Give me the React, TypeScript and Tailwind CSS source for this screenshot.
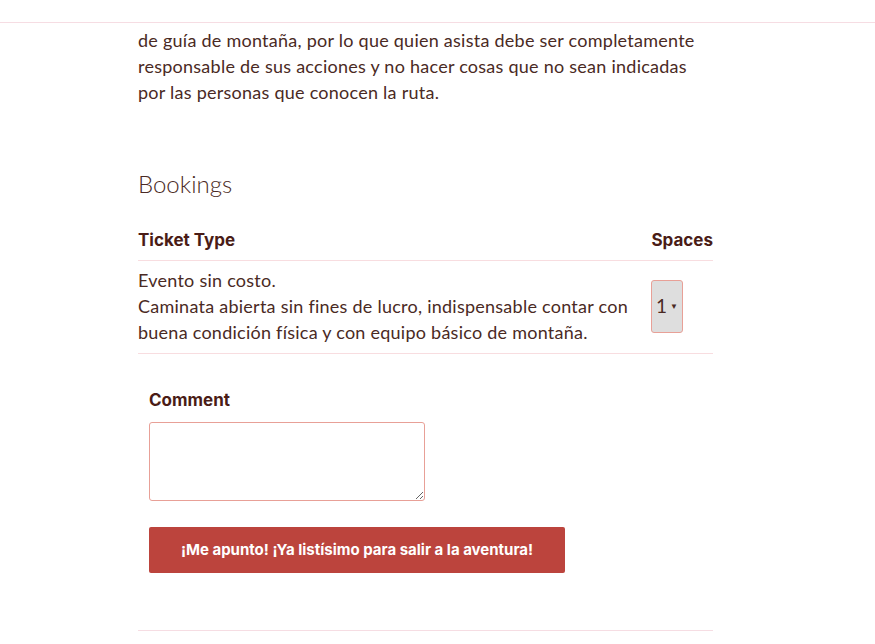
export default function App() {
  return (
    <div className="h-[644px] w-[875px] overflow-hidden bg-white text-[#4a2a24]" style={{ fontFamily: 'Lato, "Open Sans", sans-serif' }}>
      <div className="h-[23px] border-b border-[#f6dde3]" />
      <main className="mx-[138px] w-[575px]">
        <p className="mt-[4px] text-[18px] leading-[26px] tracking-[0.25px]">
          de guía de montaña, por lo que quien asista debe ser completamente responsable de sus acciones y no hacer cosas que no sean indicadas por las personas que conocen la ruta.
        </p>

        <h2 className="mt-[63px] text-[24px] font-light leading-[32px] text-[#4a2a24]">Bookings</h2>

        <table className="mt-[28px] w-full border-collapse">
          <thead>
            <tr className="border-b border-[#f8dde0]">
              <th className="pb-[8px] text-left text-[17px] font-bold leading-[24px] text-[#4a1c16]" style={{ fontFamily: 'Inter, sans-serif' }}>
                Ticket Type
              </th>
              <th className="pb-[8px] text-right text-[17px] font-bold leading-[24px] text-[#4a1c16]" style={{ fontFamily: 'Inter, sans-serif' }}>
                Spaces
              </th>
            </tr>
          </thead>
          <tbody>
            <tr className="border-b border-[#f8dde0]">
              <td className="pb-[8px] pt-[6px] pr-4 align-top text-[18px] leading-[26px] tracking-[0.25px]">
                Evento sin costo.
                <br />
                Caminata abierta sin fines de lucro, indispensable contar con buena condición física y con equipo básico de montaña.
              </td>
              <td className="w-[62px] pb-[8px] pt-[6px] align-middle">
                <div className="flex h-[53px] w-[32px] items-center justify-center gap-[3px] rounded-[3px] border border-[#e8a097] bg-[#dedede] text-[19px]">
                  <span>1</span>
                  <span className="text-[8px]">▼</span>
                </div>
              </td>
            </tr>
          </tbody>
        </table>

        <div className="px-[11px]">
          <div className="mt-[34px] text-[17px] font-bold leading-[24px] text-[#4a1c16]" style={{ fontFamily: 'Inter, sans-serif' }}>
            Comment
          </div>
          <textarea className="mt-[10px] block h-[79px] w-[276px] rounded-[3px] border border-[#e8a097] bg-white" />
          <button
            className="mt-[26px] h-[46px] w-[416px] rounded-[2px] bg-[#bc443d] text-[15px] font-bold text-white"
            style={{ fontFamily: 'Inter, sans-serif' }}
          >
            ¡Me apunto! ¡Ya listísimo para salir a la aventura!
          </button>
        </div>

        <div className="mt-[57px] border-b border-[#f6dde3]" />
      </main>
    </div>
  );
}
